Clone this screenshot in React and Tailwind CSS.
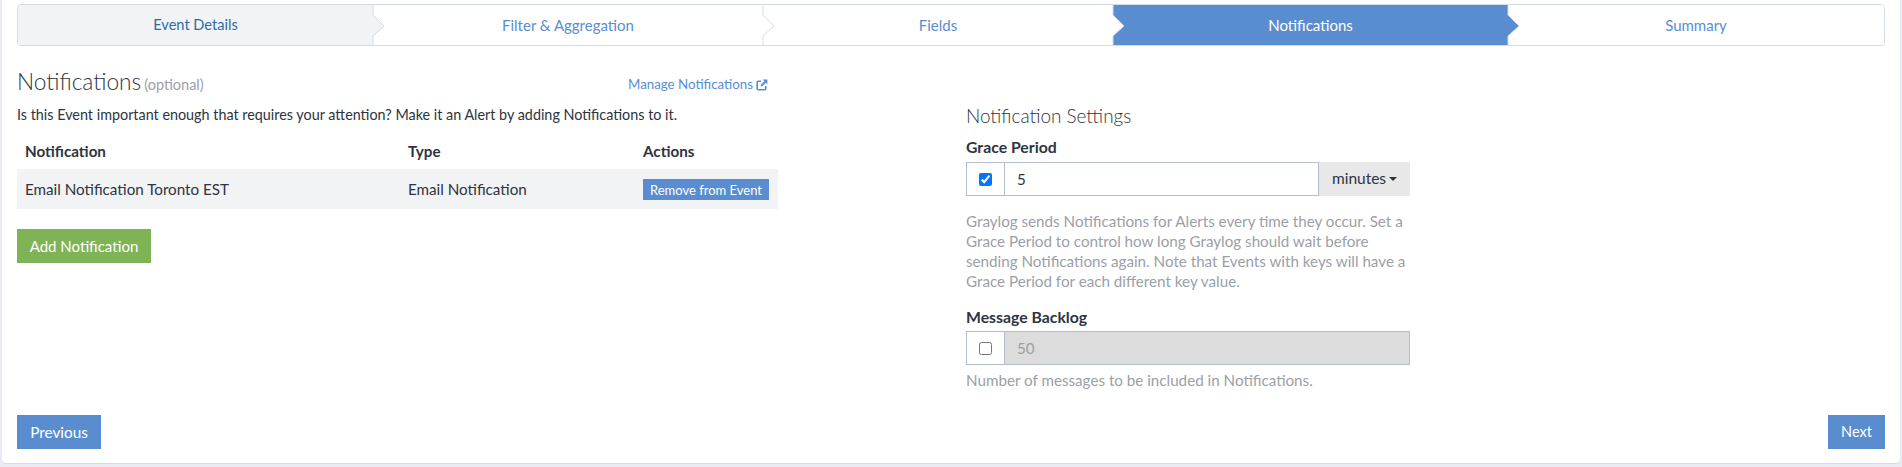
import React from "react";

function Chevron({ color = "#fff", line = "#d5dbe6" }) {
  return (
    <svg className="absolute left-full top-0 z-10 -ml-px" width="13" height="40" viewBox="0 0 13 40">
      <path d="M1 10 L12 21 L1 31 Z" fill={color} />
      <path d="M1 0 V10 L12 21 L1 31 V40" fill="none" stroke={line} strokeWidth="1" />
    </svg>
  );
}

function Step({ w, label, active, done, chevron, chevronColor, rounded }) {
  return (
    <div
      className={`relative flex items-center justify-center h-full ${rounded || ""} ${
        active
          ? "bg-[#5a8dcf] text-white text-[15px]"
          : done
          ? "bg-[#f2f3f5] text-[#2f6aa8] text-[14.6px]"
          : "bg-white text-[#5a8dcf] text-[15px]"
      }`}
      style={{ width: w }}
    >
      <span>{label}</span>
      {chevron && <Chevron color={chevronColor} />}
    </div>
  );
}

function ExternalIcon() {
  return (
    <svg width="12" height="12" viewBox="0 0 12 12" className="ml-[3px]">
      <path d="M5 2.2H2.2A1 1 0 0 0 1.2 3.2v6.6a1 1 0 0 0 1 1h6.6a1 1 0 0 0 1-1V7" fill="none" stroke="#5a8dcf" strokeWidth="1.6" />
      <path d="M6.8 .6h4.6v4.6L9.8 3.7 5.8 7.6 4.4 6.2l4-4z" fill="#5a8dcf" />
    </svg>
  );
}

export default function App() {
  return (
    <div className="h-[467px] bg-[#e9ecf2] pl-[2px] pr-[2px] font-['Lato','Liberation_Sans',sans-serif] text-[15.2px] text-[#2e3440] overflow-hidden">
      <div className="h-[463px] bg-white rounded-b-[4px] pt-[4px] pl-[15px] flex flex-col shadow-[0_1px_1px_#d5dbe6]">
        <div className="flex h-[42px] w-[1868px] border border-[#d5dbe6] rounded-[4px]">
          <Step w={355} label="Event Details" done chevron chevronColor="#f2f3f5" rounded="rounded-l-[3px]" />
          <Step w={390} label="Filter & Aggregation" chevron />
          <Step w={350} label="Fields" chevron />
          <Step w={395} label="Notifications" active chevron chevronColor="#5a8dcf" />
          <Step w={376} label="Summary" rounded="rounded-r-[3px]" />
        </div>

        <div className="flex mt-[22px]">
          <div className="w-[754px] mr-[195px] shrink-0">
            <div className="flex w-[751px] items-end justify-between h-[28px]">
              <div className="flex items-baseline">
                <span className="text-[22.7px] leading-[28px] font-light text-[#2e3440]">Notifications</span>
                <span className="text-[14.5px] text-[#9b9fa7] ml-[3px]">(optional)</span>
              </div>
              <a className="flex items-center text-[13.3px] text-[#5a8dcf] mb-[1px]">
                Manage Notifications
                <ExternalIcon />
              </a>
            </div>
            <p className="mt-[9px] leading-[20px] text-[14.36px] whitespace-nowrap">
              Is this Event important enough that requires your attention? Make it an Alert by adding Notifications to it.
            </p>
            <table className="mt-[9px] w-[761px] border-collapse table-fixed">
              <thead>
                <tr className="h-[35px] text-left">
                  <th className="w-[391px] pl-[8px] font-bold">Notification</th>
                  <th className="w-[235px] font-bold">Type</th>
                  <th className="font-bold">Actions</th>
                </tr>
              </thead>
              <tbody>
                <tr className="h-[40px] bg-[#f2f3f5]">
                  <td className="pl-[8px]">Email Notification Toronto EST</td>
                  <td>Email Notification</td>
                  <td>
                    <button className="mt-[1px] bg-[#5a8dcf] text-white text-[13px] leading-[20px] h-[21px] w-[126px] flex items-center justify-center whitespace-nowrap">
                      Remove from Event
                    </button>
                  </td>
                </tr>
              </tbody>
            </table>
            <button className="mt-[20px] h-[34px] w-[134px] bg-[#7eb356] text-white text-[15px] flex items-center justify-center">
              Add Notification
            </button>
          </div>

          <div className="w-[444px] mt-[36px] shrink-0">
            <h3 className="text-[18.9px] leading-[24px] font-light text-[#2e3440]">Notification Settings</h3>
            <label className="block mt-[9px] font-bold leading-[20px] text-[15.8px]">Grace Period</label>
            <div className="flex h-[34px] mt-[5px]">
              <div className="w-[39px] border border-[#b4bccd] flex items-center justify-center">
                <input type="checkbox" defaultChecked className="w-[13px] h-[13px] accent-[#0075ff]" />
              </div>
              <input
                readOnly
                value="5"
                className="flex-1 min-w-0 border border-l-0 border-[#b4bccd] pl-[12px] outline-none text-[15.2px]"
              />
              <div className="w-[91px] bg-[#e8e8e8] flex items-center justify-center text-[15.5px]">
                minutes
                <span className="ml-[3px] w-0 h-0 border-x-[4px] border-x-transparent border-t-[4px] border-t-[#2e3440]" />
              </div>
            </div>
            <p className="mt-[15px] leading-[20px] text-[#9b9fa7] whitespace-nowrap">
              Graylog sends Notifications for Alerts every time they occur. Set a<br />
              Grace Period to control how long Graylog should wait before<br />
              sending Notifications again. Note that Events with keys will have a<br />
              Grace Period for each different key value.
            </p>
            <label className="block mt-[16px] font-bold leading-[20px] text-[15.8px]">Message Backlog</label>
            <div className="flex h-[34px] mt-[4px]">
              <div className="w-[39px] border border-[#b4bccd] flex items-center justify-center">
                <input type="checkbox" className="w-[13px] h-[13px]" />
              </div>
              <input
                readOnly
                disabled
                value="50"
                className="flex-1 min-w-0 border border-l-0 border-[#b4bccd] bg-[#dcdcdc] pl-[12px] text-[#9b9fa7] text-[15.2px]"
              />
            </div>
            <p className="mt-[5px] leading-[20px] text-[#9b9fa7]">
              Number of messages to be included in Notifications.
            </p>
          </div>
        </div>

        <div className="mt-auto mb-[14px] flex justify-between w-[1868px]">
          <button className="h-[34px] w-[84px] bg-[#5a8dcf] text-white text-[15.3px] flex items-center justify-center">Previous</button>
          <button className="h-[34px] w-[57px] bg-[#5a8dcf] text-white text-[14.5px] flex items-center justify-center">Next</button>
        </div>
      </div>
    </div>
  );
}
